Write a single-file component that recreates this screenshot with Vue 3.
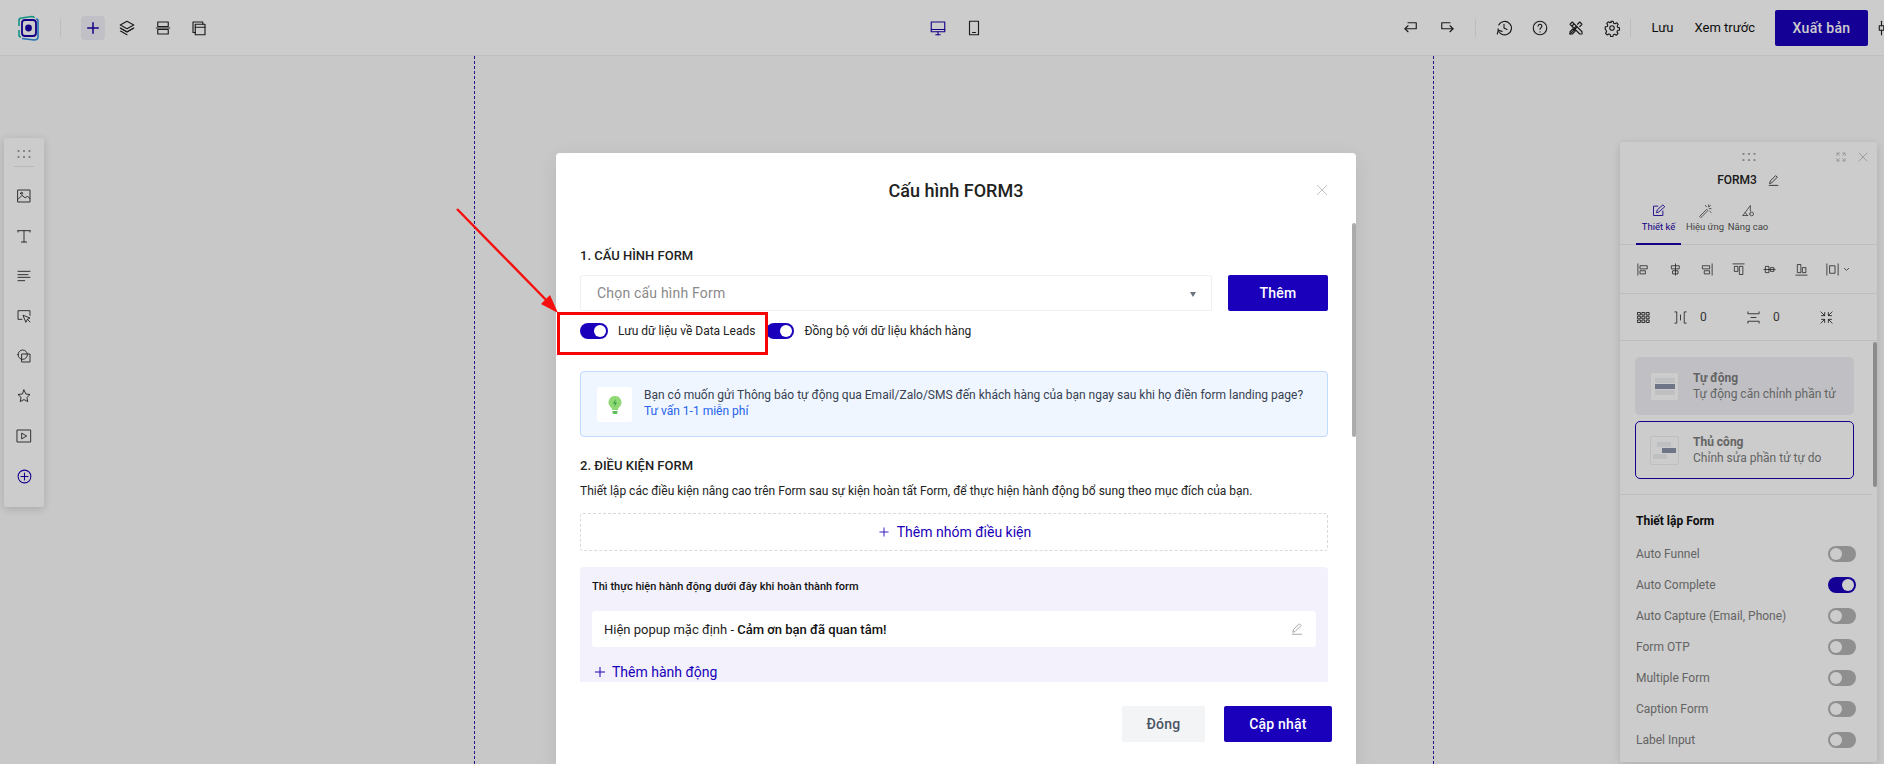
<script setup>
import { h } from 'vue'

const ICONS = {
  plus: ['M12 5v14', 'M5 12h14'],
  layers: ['M12 3l9 5-9 5-9-5z', 'M3.5 12.5L12 17.5l8.5-5', 'M3 12l9 5 9-5', 'M12 21l-8.5-5'],
  sections: ['M5 4h14v6H5z', 'M3 12h18', 'M5 14h14v6H5z'],
  pages: ['M7 7h13v14H7z', 'M7 11h13', 'M7 18H4V4h13v3'],
  desktop: ['M3 4h18v13H3z', 'M9 21h6', 'M12 17v4', 'M3 14h18'],
  tablet: ['M6 3h12v18H6z', 'M10 18h4'],
  undo: ['M8 5h11v8H4', 'M8 9l-4 4 4 4'],
  redo: ['M16 5H5v8h15', 'M16 9l4 4-4 4'],
  history: ['M5 8a9 9 0 1 1-1 5', 'M3 20l1.5-5 5 1.5', 'M12 7v5l4 2'],
  help: ['M3 12a9 9 0 1 0 18 0a9 9 0 1 0-18 0z', 'M9.5 9.5a2.5 2.5 0 1 1 3.8 2.1c-.9.6-1.3 1-1.3 2.2', 'M12 17v.2'],
  tools: ['M4 7l3-3 13 13v3h-3z', 'M7 9l2-2', 'M10 12l2-2', 'M4 20l9-9', 'M14 7l3-3 3 3-3 3', 'M4 20v-3l4-4 3 3-4 4z'],
  gear: ['M9 12a3 3 0 1 0 6 0a3 3 0 1 0-6 0z', 'M10.5 3h3l.6 2.6 1.8.8 2.3-1.4 2.1 2.1-1.4 2.3.8 1.8 2.3.6v3l-2.6.6-.8 1.8 1.4 2.3-2.1 2.1-2.3-1.4-1.8.8-.6 2.3h-3l-.6-2.6-1.8-.8-2.3 1.4-2.1-2.1 1.4-2.3-.8-1.8L3 13.5v-3l2.6-.6.8-1.8L5 5.8l2.1-2.1 2.3 1.4 1.8-.8z'],
  sliders: ['M6 3v6', 'M6 15v6', 'M3 9h6v6H3z', 'M16 3v3', 'M16 12v9', 'M13 6h6v6h-6z'],
  image: ['M3 3h18v18H3z', 'M3 17l6-6 5 4 3-3 4 4', 'M7 8a1.5 1.5 0 1 0 3 0a1.5 1.5 0 1 0-3 0z'],
  text: ['M3 4h18', 'M12 4v17', 'M8 21h8', 'M3 4v2', 'M21 4v2'],
  lines: ['M3 5h18', 'M3 10h15', 'M3 14h18', 'M3 19h10'],
  pointer: ['M9 17H3V4h18v7', 'M11 11l10 4-4 2-2 4z', 'M17 17l4 4'],
  shapes: ['M3 10a7 7 0 1 0 14 0a7 7 0 1 0-14 0z', 'M9 9h12v12H9z'],
  star: ['M12 3l2.8 6 6.2.8-4.6 4.3 1.2 6.4-5.6-3.2-5.6 3.2 1.2-6.4L3 9.8 9.2 9z'],
  video: ['M2 3h20v18H2z', 'M9 8l7 4-7 4z'],
  addc: ['M3 12a9 9 0 1 0 18 0a9 9 0 1 0-18 0z', 'M12 7v10', 'M7 12h10'],
  expand: ['M4 9V4h5', 'M15 4h5v5', 'M20 15v5h-5', 'M9 20H4v-5', 'M4 4l5 5', 'M20 4l-5 5', 'M20 20l-5-5', 'M4 20l5-5'],
  close: ['M4 4l16 16', 'M20 4L4 20'],
  pen: ['M5 17l1-4L16 3l3 3L9 16z', 'M4 21h16'],
  edit: ['M11 5H4v15h15v-7', 'M9 15l1-4 9-8 3 3-9 8z'],
  wand: ['M3 21L14 10l2 2L5 23z', 'M17 3v3', 'M21 9h-3', 'M20 4l-2 2', 'M12 4l1.5 2', 'M21 15l-2-1.5'],
  adv: ['M3 20L15 4v9', 'M3 20h8', 'M7 15l3 5', 'M14 17.500a3 3 0 1 0 6 0a3 3 0 1 0-6 0z'],
  al1: ['M3 3v18', 'M7 6h11v5H7z', 'M7 14h8v5H7z'],
  al2: ['M12 3v18', 'M6 6h12v5H6z', 'M8 14h8v5H8z'],
  al3: ['M21 3v18', 'M6 6h11v5H6z', 'M9 14h8v5H9z'],
  al4: ['M3 3h18', 'M6 7h5v8H6z', 'M14 7h5v13h-5z'],
  al5: ['M3 12h18', 'M6 7h5v10H6z', 'M14 9h5v6h-5z'],
  al6: ['M3 21h18', 'M6 4h5v13H6z', 'M14 9h5v8h-5z'],
  al7: ['M3 3v18', 'M21 3v18', 'M8 6h8v12H8z'],
  grid: ['M3 4h4v4H3z', 'M10 4h4v4h-4z', 'M17 4h4v4h-4z', 'M3 10h4v4H3z', 'M10 10h4v4h-4z', 'M17 10h4v4h-4z', 'M3 16h4v4H3z', 'M10 16h4v4h-4z', 'M17 16h4v4h-4z'],
  gapx: ['M3 3h3v18H3', 'M21 3h-3v18h3', 'M12 8v8'],
  gapy: ['M3 3v3h18V3', 'M3 21v-3h18v3', 'M8 12h8'],
  shrink: ['M3 3l6 6', 'M9 4v5H4', 'M21 3l-6 6', 'M15 4v5h5', 'M3 21l6-6', 'M9 20v-5H4', 'M21 21l-6-6', 'M15 20v-5h5']
}

const Ico = (p) =>
  h(
    'svg',
    {
      viewBox: '0 0 24 24',
      width: p.s || 16,
      height: p.s || 16,
      fill: 'none',
      stroke: 'currentColor',
      'stroke-width': p.w || 1.5,
      'stroke-linecap': 'round',
      'stroke-linejoin': 'round'
    },
    ICONS[p.n].map((d) => h('path', { d }))
  )

const leftIcons = ['image', 'text', 'lines', 'pointer', 'shapes', 'star', 'video']
const alignIcons = ['al1', 'al2', 'al3', 'al4', 'al5', 'al6']
const settings = [
  { label: 'Auto Funnel', on: false },
  { label: 'Auto Complete', on: true },
  { label: 'Auto Capture (Email, Phone)', on: false },
  { label: 'Form OTP', on: false },
  { label: 'Multiple Form', on: false },
  { label: 'Caption Form', on: false },
  { label: 'Label Input', on: false }
]
</script>

<template>
  <div class="page">
    <header class="topbar">
      <div class="tb-left">
        <svg class="logo" viewBox="0 0 24 26" width="24" height="26" fill="none">
          <path d="M3 11V5.500Q3 3 5.500 3L16 1.500Q18 1.500 18 3" stroke="#19b8a6" stroke-width="1.600" />
          <path d="M3 15v5q0 2 2 2" stroke="#19b8a6" stroke-width="1.600" />
          <path d="M6 23.500L18 25q4 0 4-3V6q0-2-2-2" stroke="#2f8fe0" stroke-width="1.600" />
          <rect x="6" y="5" width="14" height="16" rx="3" stroke="#1a00a8" stroke-width="1.800" />
          <circle cx="12.500" cy="13" r="3.400" fill="#1a00a8" />
        </svg>
        <span class="vsep"></span>
        <span class="plus-btn"><Ico n="plus" :s="18" :w="2" /></span>
        <span class="tb-i"><Ico n="layers" :s="18" /></span>
        <span class="tb-i"><Ico n="sections" :s="18" /></span>
        <span class="tb-i"><Ico n="pages" :s="18" /></span>
      </div>
      <div class="tb-center">
        <span class="tb-i active"><Ico n="desktop" :s="18" /></span>
        <span class="tb-i"><Ico n="tablet" :s="18" /></span>
      </div>
      <div class="tb-right">
        <span class="tb-i"><Ico n="undo" :s="18" /></span>
        <span class="tb-i"><Ico n="redo" :s="18" /></span>
        <span class="vsep narrow"></span>
        <span class="tb-i"><Ico n="history" :s="18" /></span>
        <span class="tb-i"><Ico n="help" :s="18" /></span>
        <span class="tb-i"><Ico n="tools" :s="18" /></span>
        <span class="tb-i"><Ico n="gear" :s="18" /></span>
        <span class="vsep last"></span>
        <span class="tb-link">Lưu</span>
        <span class="tb-link">Xem trước</span>
        <span class="publish">Xuất bản</span>
        <span class="tb-end"><Ico n="sliders" :s="18" /></span>
      </div>
    </header>

    <main class="canvas">
      <div class="guide"></div>
      <div class="guide"></div>
    </main>

    <aside class="left-tools">
      <svg class="dots" width="14" height="8" viewBox="0 0 14 8"><g fill="#8c8c8c"><circle cx="1.500" cy="1" r="1" /><circle cx="7" cy="1" r="1" /><circle cx="12.500" cy="1" r="1" /><circle cx="1.500" cy="7" r="1" /><circle cx="7" cy="7" r="1" /><circle cx="12.500" cy="7" r="1" /></g></svg>
      <div class="lt-sep"></div>
      <span v-for="n in leftIcons" :key="n" class="lt-i"><Ico :n="n" :s="16" :w="1.300" /></span>
      <span class="lt-i add"><Ico n="addc" :s="17" :w="1.500" /></span>
    </aside>

    <aside class="panel">
      <div class="p-head">
        <svg class="dots" width="14" height="8" viewBox="0 0 14 8"><g fill="#a3a3a3"><circle cx="1.500" cy="1" r="1.100" /><circle cx="7" cy="1" r="1.100" /><circle cx="12.500" cy="1" r="1.100" /><circle cx="1.500" cy="7" r="1.100" /><circle cx="7" cy="7" r="1.100" /><circle cx="12.500" cy="7" r="1.100" /></g></svg>
        <span class="p-win"><Ico n="expand" :s="12" :w="1.200" /><Ico n="close" :s="12" :w="1.200" /></span>
      </div>
      <div class="p-name">FORM3 <Ico n="pen" :s="13" /></div>
      <div class="p-tabs">
        <div class="p-tab on"><Ico n="edit" :s="15" :w="1.400" /><span>Thiết kế</span></div>
        <div class="p-tab"><Ico n="wand" :s="15" :w="1.400" /><span>Hiệu ứng</span></div>
        <div class="p-tab"><Ico n="adv" :s="15" :w="1.400" /><span>Nâng cao</span></div>
      </div>
      <div class="p-align">
        <span v-for="n in alignIcons" :key="n" class="al"><Ico :n="n" :s="15" :w="1.200" /></span>
        <span class="al last"><Ico n="al7" :s="15" :w="1.200" /><svg width="7" height="5" viewBox="0 0 7 5" fill="none" stroke="#666"><path d="M1 1l2.500 2.500L6 1" /></svg></span>
      </div>
      <div class="p-spacing">
        <span class="sp-a"><Ico n="grid" :s="15" :w="1.400" /></span>
        <span class="sp-b"><Ico n="gapx" :s="15" :w="1.300" /><em>0</em></span>
        <span class="sp-c"><Ico n="gapy" :s="15" :w="1.300" /><em>0</em></span>
        <span class="sp-d"><Ico n="shrink" :s="15" :w="1.300" /></span>
      </div>
      <div class="p-scroll">
        <div class="modes">
          <div class="mode auto">
            <div class="thumb">
              <i class="th w"></i><i class="th w dark"></i><i class="th w"></i>
            </div>
            <div class="mode-t"><b>Tự động</b><span>Tự động căn chỉnh phần tử</span></div>
          </div>
          <div class="mode manual">
            <div class="thumb free">
              <i class="th s1"></i><i class="th s2 dark"></i><i class="th s3"></i>
            </div>
            <div class="mode-t"><b>Thủ công</b><span>Chỉnh sửa phần tử tự do</span></div>
          </div>
        </div>
        <div class="p-settings">
          <h4>Thiết lập Form</h4>
          <div v-for="s in settings" :key="s.label" class="set-row">
            <span>{{ s.label }}</span>
            <i class="toggle" :class="{ on: s.on }"></i>
          </div>
        </div>
      </div>
      <div class="p-thumb"></div>
    </aside>

    <div class="overlay"></div>

    <section class="modal">
      <div class="m-head">
        <h2>Cấu hình FORM3</h2>
        <span class="m-close"><Ico n="close" :s="14" :w="1" /></span>
      </div>
      <div class="m-body">
        <h3>1. CẤU HÌNH FORM</h3>
        <div class="sel-row">
          <div class="select"><span>Chọn cấu hình Form</span><i class="caret"></i></div>
          <button class="btn primary add">Thêm</button>
        </div>
        <div class="tog-row">
          <i class="toggle on"></i><span>Lưu dữ liệu về Data Leads</span>
          <i class="toggle on second"></i><span>Đồng bộ với dữ liệu khách hàng</span>
        </div>
        <div class="info">
          <div class="bulb">
            <svg width="14" height="20" viewBox="0 0 14 20">
              <path d="M7 1a6.500 6.500 0 0 1 4 11.600c-.8.7-1 1.400-1 2.400H4c0-1-.2-1.700-1-2.400A6.500 6.500 0 0 1 7 1z" fill="#8fd873" />
              <path d="M4.500 16h5v1.500a1.500 1.500 0 0 1-1.500 1.500H6a1.500 1.500 0 0 1-1.500-1.500z" fill="#5fbf5b" />
              <path d="M7.800 4L5 8.500h2l-.8 3.500L9 7.500H7z" fill="#2f9d44" />
            </svg>
          </div>
          <div class="info-t">
            <p>Bạn có muốn gửi Thông báo tự động qua Email/Zalo/SMS đến khách hàng của bạn ngay sau khi họ điền form landing page?</p>
            <a>Tư vấn 1-1 miễn phí</a>
          </div>
        </div>
        <h3 class="s2">2. ĐIỀU KIỆN FORM</h3>
        <p class="desc">Thiết lập các điều kiện nâng cao trên Form sau sự kiện hoàn tất Form, để thực hiện hành động bổ sung theo mục đích của bạn.</p>
        <div class="dashed"><Ico n="plus" :s="14" :w="1.500" /><span>Thêm nhóm điều kiện</span></div>
        <div class="then">
          <div class="then-t">Thì thực hiện hành động dưới đây khi hoàn thành form</div>
          <div class="then-row">
            <span>Hiện popup mặc định - <b>Cảm ơn bạn đã quan tâm!</b></span>
            <span class="then-edit"><Ico n="pen" :s="14" :w="1.100" /></span>
          </div>
          <div class="then-add"><Ico n="plus" :s="16" :w="1.500" /><span>Thêm hành động</span></div>
        </div>
      </div>
      <div class="m-foot">
        <button class="btn ghost">Đóng</button>
        <button class="btn primary">Cập nhật</button>
      </div>
      <div class="m-thumb"></div>
    </section>

    <div class="mark"></div>
    <svg class="arrow" width="120" height="120" viewBox="0 0 120 120" fill="none">
      <path d="M6 7L100 103" stroke="#f60f0f" stroke-width="2.400" />
      <path d="M107 111L90 102L99 93z" fill="#f60f0f" />
    </svg>
  </div>
</template>

<style>
html, body { margin: 0; padding: 0; overflow: hidden; }
</style>

<style scoped>
.page {
  position: relative;
  width: 1884px;
  height: 764px;
  overflow: hidden;
  background: #fbfbfb;
  font-family: Roboto, "Liberation Sans", sans-serif;
  color: #1f1f1f;
  display: flex;
  flex-direction: column;
}
.topbar {
  height: 55px;
  flex: none;
  background: #fff;
  border-bottom: 1px solid #f0f0f0;
  display: flex;
  align-items: center;
  position: relative;
  color: #222;
}
.tb-left { display: flex; align-items: center; padding-left: 16px; flex: 1; }
.logo { flex: none; }
.vsep { width: 1px; height: 18px; background: #ececec; margin: 0 20px; flex: none; }
.plus-btn {
  width: 24px; height: 24px; border-radius: 4px; background: #f0f0f8;
  color: #1a00a8; display: flex; align-items: center; justify-content: center;
  margin-right: 4px;
}
.tb-i { width: 36px; height: 24px; display: flex; align-items: center; justify-content: center; flex: none; }
.tb-i.active { color: #1a00a8; }
.tb-center { display: flex; position: absolute; left: 920px; }
.tb-right { display: flex; align-items: center; }
.vsep.narrow { margin: 0 10px; }
.vsep.last { margin: 0 0 0 0; }
.tb-link { font-size: 13px; margin-left: 21px; color: #111; }
.publish {
  margin-left: 20px; width: 93px; height: 36px; background: #1b00bb; color: #fff;
  border-radius: 2px; font-size: 14px; font-weight: 500; letter-spacing: .3px;
  display: flex; align-items: center; justify-content: center;
}
.tb-end { width: 36px; margin-right: -20px; display: flex; justify-content: center; }

.canvas {
  flex: 1;
  display: flex;
  justify-content: space-between;
  padding: 0 450px 0 474px;
}
.guide { width: 0; border-left: 1px dashed #2a1bb0; }

.left-tools {
  position: absolute; left: 4px; top: 138px; width: 40px; height: 369px;
  background: #fff; box-shadow: 0 2px 10px rgba(0,0,0,.16);
  display: flex; flex-direction: column; align-items: center; color: #222;
  border-radius: 2px;
}
.dots { flex: none; }
.left-tools .dots { margin-top: 12px; }
.lt-sep { width: 20px; height: 1px; background: #e8e8e8; margin: 8px 0 9px; flex: none; }
.lt-i { height: 40px; display: flex; align-items: center; justify-content: center; flex: none; }
.lt-i.add { color: #1a00b0; }

.panel {
  position: absolute; left: 1620px; top: 142px; width: 257px; height: 620px;
  background: #fff; box-shadow: 0 2px 10px rgba(0,0,0,.14);
  display: flex; flex-direction: column; color: #222;
  border-radius: 2px;
}
.p-head { height: 26px; display: flex; align-items: center; justify-content: center; position: relative; flex: none; padding-top: 3px; box-sizing: border-box; }
.p-win { position: absolute; right: 8px; top: 9px; display: flex; gap: 10px; color: #a0a0a0; }
.p-name { height: 24px; display: flex; align-items: center; justify-content: center; gap: 10px; font-size: 12px; font-weight: 500; padding-right: 0; flex: none; margin-top: 0; }
.p-tabs { height: 53px; flex: none; display: flex; padding-left: 16px; border-bottom: 1px solid #eee; box-sizing: border-box; }
.p-tab { width: 38px; margin-right: 0; display: flex; flex-direction: column; align-items: center; font-size: 9.500px; color: #555; padding-top: 11px; gap: 3px; position: relative; box-sizing: border-box; white-space: nowrap; }
.p-tab.on { width: 45px; color: #1a00a8; border-bottom: 2px solid #1a00a8; height: 53px; }
.p-tab + .p-tab { margin-left: 5px; }
.p-align { height: 49px; flex: none; border-bottom: 1px solid #eee; display: flex; align-items: center; padding-left: 16px; box-sizing: border-box; }
.al { width: 31.500px; display: flex; align-items: center; justify-content: flex-start; flex: none; }
.al.last { gap: 3px; width: auto; }
.p-spacing { height: 47px; flex: none; border-bottom: 1px solid #eee; display: flex; align-items: center; box-sizing: border-box; padding-left: 16px; }
.p-spacing span { display: flex; align-items: center; }
.p-spacing em { font-style: normal; font-size: 12px; color: #444; margin-left: 12px; }
.sp-a { width: 37px; }
.sp-b { width: 73px; }
.sp-c { width: 73px; }
.p-scroll { flex: 1; overflow: hidden; }
.modes { padding: 16px 19px 15px 15px; border-bottom: 1px solid #eee; margin-right: 4px; display: flex; flex-direction: column; gap: 6px; }
.mode { height: 58px; border-radius: 5px; box-sizing: border-box; display: flex; align-items: center; padding-left: 15px; gap: 14px; }
.mode.auto { background: #f0f1f5; }
.mode.manual { border: 1px solid #1a00b0; padding-left: 14px; }
.thumb { width: 27px; height: 27px; border: 1px solid #eee; border-radius: 2px; background: #fff; flex: none; display: flex; flex-direction: column; gap: 1px; align-items: center; justify-content: center; }
.th { display: block; height: 5px; background: #eef0f3; }
.th.w { width: 20px; }
.th.dark { background: #8a93a8; }
.thumb.free { position: relative; }
.th.s1 { width: 14px; margin-right: 2px; }
.th.s2 { width: 14px; margin-left: 9px; }
.th.s3 { width: 14px; margin-right: 10px; }
.mode-t { display: flex; flex-direction: column; font-size: 12px; line-height: 16px; color: #7d7d7d; }
.mode-t b { font-weight: 700; }
.p-settings { padding: 18px 21px 0 16px; }
.p-settings h4 { margin: 0 0 9px; font-size: 12px; line-height: 16px; font-weight: 700; color: #111; }
.set-row { height: 31px; display: flex; align-items: center; justify-content: space-between; font-size: 12px; color: #7d7d7d; }
.p-thumb { position: absolute; left: 253px; top: 200px; width: 4px; height: 145px; border-radius: 2px; background: #b0b0b0; }

.toggle { display: block; width: 28px; height: 16px; border-radius: 8px; background: #b3b3b3; position: relative; flex: none; }
.toggle::after { content: ""; position: absolute; left: 2px; top: 2px; width: 12px; height: 12px; border-radius: 50%; background: #fff; }
.toggle.on { background: #1b00bb; }
.toggle.on::after { left: 14px; }

.overlay { position: absolute; inset: 0; background: rgba(0,0,0,.2); }

.modal {
  position: absolute; left: 556px; top: 153px; width: 800px; height: 620px;
  background: #fff; border-radius: 4px; display: flex; flex-direction: column;
  box-shadow: 0 4px 20px rgba(0,0,0,.08);
}
.m-head { height: 74px; flex: none; display: flex; align-items: center; justify-content: center; position: relative; }
.m-head h2 { margin: 0; font-size: 18px; font-weight: 500; color: #222; }
.m-close { position: absolute; right: 27px; top: 30px; color: #999; display: flex; }
.m-body { height: 455px; flex: none; overflow: hidden; padding: 21px 28px 0 24px; box-sizing: border-box; }
h3 { margin: 0; font-size: 13px; line-height: 16px; font-weight: 500; color: #222; }
h3.s2 { margin-top: 21px; }
.sel-row { display: flex; margin-top: 11px; gap: 16px; }
.select { flex: 1; height: 36px; border: 1px solid #f0f0f0; border-radius: 2px; box-sizing: border-box; display: flex; align-items: center; justify-content: space-between; padding: 0 15px 0 16px; font-size: 14px; color: #8a8a8a; letter-spacing: .2px; }
.caret { width: 0; height: 0; border-left: 3.500px solid transparent; border-right: 3.500px solid transparent; border-top: 5px solid #6b7280; margin-top: 2px; }
.btn { border: 0; border-radius: 2px; height: 36px; font-family: inherit; font-size: 14px; font-weight: 500; letter-spacing: .2px; padding: 0; }
.btn.primary { background: #1b00bb; color: #fff; width: 108px; }
.btn.add { width: 100px; }
.btn.ghost { background: #f3f4f6; color: #4b5563; width: 83px; }
.tog-row { display: flex; align-items: center; margin-top: 12px; height: 16px; font-size: 12px; color: #222; }
.tog-row span { margin-left: 10px; }
.tog-row .second { margin-left: 11px; }
.info { margin-top: 32px; height: 66px; box-sizing: border-box; background: #eff6ff; border: 1px solid #bfdbfe; border-radius: 4px; display: flex; padding: 15px 16px; gap: 12px; }
.bulb { width: 35px; height: 35px; background: #fff; border-radius: 3px; display: flex; align-items: center; justify-content: center; flex: none; }
.info-t { font-size: 12px; line-height: 16px; color: #374151; }
.info-t p { margin: 0; }
.info-t a { color: #2563eb; }
.desc { margin: 9px 0 0; font-size: 12px; line-height: 16px; color: #222; }
.dashed { margin-top: 14px; height: 38px; box-sizing: border-box; border: 1px dashed #d9d9d9; border-radius: 3px; display: flex; align-items: center; justify-content: center; gap: 6px; color: #1a00b8; font-size: 14px; }
.then { margin-top: 16px; background: #f3f2fc; border-radius: 4px; padding: 12px; height: 200px; box-sizing: border-box; }
.then-t { font-size: 11px; line-height: 16px; font-weight: 500; color: #111; }
.then-row { margin-top: 16px; height: 36px; background: #fff; border-radius: 3px; display: flex; align-items: center; justify-content: space-between; padding: 0 12px; font-size: 13px; color: #222; }
.then-row b { font-weight: 500; color: #111; }
.then-edit { display: flex; color: #777; }
.then-add { margin-top: 13px; height: 24px; display: flex; align-items: center; gap: 4px; color: #1a00b8; font-size: 14px; }
.m-foot { flex: none; padding: 24px 24px 0 0; display: flex; justify-content: flex-end; gap: 19px; }
.m-thumb { position: absolute; left: 796px; top: 70px; width: 4px; height: 214px; border-radius: 2px; background: #ababab; }

.mark { position: absolute; left: 557px; top: 312px; width: 211px; height: 43px; box-sizing: border-box; border: 3px solid #f60505; }
.arrow { position: absolute; left: 451px; top: 202px; }
</style>
